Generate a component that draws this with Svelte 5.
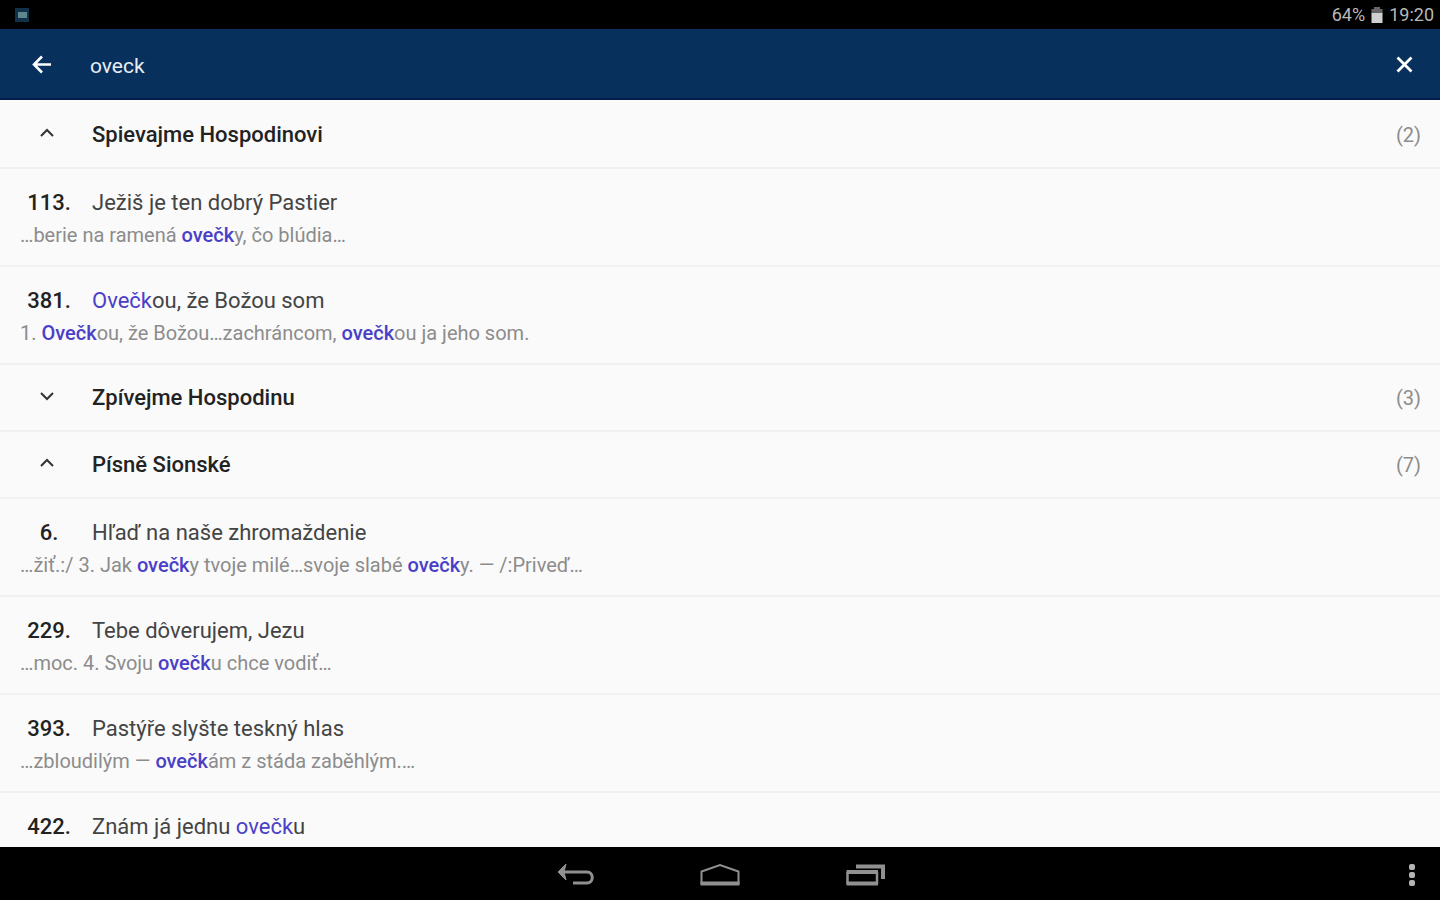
<script lang="ts">
type Song = { number: number; title: string; snippet?: string };
type Songbook = { name: string; count: number; open: boolean; songs: Song[] };

let query = $state("oveck");

let songbooks: Songbook[] = $state([
  {
    name: "Spievajme Hospodinovi",
    count: 2,
    open: true,
    songs: [
      { number: 113, title: "Ježiš je ten dobrý Pastier", snippet: "…berie na ramená ovečky, čo blúdia…" },
      { number: 381, title: "Ovečkou, že Božou som", snippet: "1. Ovečkou, že Božou…zachráncom, ovečkou ja jeho som." },
    ],
  },
  { name: "Zpívejme Hospodinu", count: 3, open: false, songs: [] },
  {
    name: "Písně Sionské",
    count: 7,
    open: true,
    songs: [
      { number: 6, title: "Hľaď na naše zhromaždenie", snippet: "…žiť.:/ 3. Jak ovečky tvoje milé…svoje slabé ovečky. — /:Priveď…" },
      { number: 229, title: "Tebe dôverujem, Jezu", snippet: "…moc. 4. Svoju ovečku chce vodiť…" },
      { number: 393, title: "Pastýře slyšte teskný hlas", snippet: "…zbloudilým — ovečkám z stáda zaběhlým.…" },
      { number: 422, title: "Znám já jednu ovečku" },
    ],
  },
]);

// one character in, one character out, so indexes match the original text
function fold(text: string) {
  return [...text].map(c => c.normalize("NFD")[0].toLowerCase()).join("");
}

function split(text: string, needle: string) {
  const parts: { text: string; hit: boolean }[] = [];
  const folded = fold(text);
  const q = fold(needle.trim());
  let pos = 0;
  while (q && pos < text.length) {
    const found = folded.indexOf(q, pos);
    if (found < 0) break;
    if (found > pos) parts.push({ text: text.slice(pos, found), hit: false });
    parts.push({ text: text.slice(found, found + q.length), hit: true });
    pos = found + q.length;
  }
  if (pos < text.length) parts.push({ text: text.slice(pos), hit: false });
  return parts;
}
</script>

{#snippet marked(text: string)}
  {#each split(text, query) as part}{#if part.hit}<mark>{part.text}</mark>{:else}{part.text}{/if}{/each}
{/snippet}

<div class="screen">
  <div class="status">
    <svg class="notification" width="14" height="14" viewBox="0 0 14 14" aria-hidden="true">
      <rect width="14" height="14" fill="#12324a" />
      <rect x="3" y="4" width="9" height="6" fill="#5f8790" />
    </svg>
    <span>64%</span>
    <svg width="12" height="18" viewBox="0 0 12 18" aria-hidden="true">
      <path d="M3 1h6v2h2.500v5H.5V3H3z" fill="#666" />
      <path d="M.5 7h11v10H.5z" fill="#d0d0d0" />
    </svg>
    <span>19:20</span>
  </div>

  <header>
    <button class="icon" aria-label="Back">
      <svg width="22" height="22" viewBox="0 0 22 22" fill="none" stroke="#fff" stroke-width="2.600">
        <path d="M20 11.500H3M11 3.500l-8 8 8 8" />
      </svg>
    </button>
    <input type="text" aria-label="Search" bind:value={query} />
    <button class="icon" aria-label="Clear" onclick={() => (query = "")}>
      <svg width="22" height="22" viewBox="0 0 22 22" fill="none" stroke="#fff" stroke-width="2.800">
        <path d="M3.500 4.500l14 14M17.500 4.500l-14 14" />
      </svg>
    </button>
  </header>

  <main>
    {#each songbooks as book}
      <section>
        <button class="book" aria-expanded={book.open} onclick={() => (book.open = !book.open)}>
          <span class="chevron">
            <svg width="16" height="10" viewBox="0 0 16 10" fill="none" stroke="#333" stroke-width="2">
              <path d={book.open ? "M2 8l6-6 6 6" : "M2 2l6 6 6-6"} />
            </svg>
          </span>
          <span class="name">{book.name}</span>
          <span class="count">({book.count})</span>
        </button>
        {#if book.open}
          {#each book.songs as song}
            <a class="song" href="#song-{song.number}">
              <span class="heading">
                <span class="number">{song.number}.</span>
                <span class="title">{@render marked(song.title)}</span>
              </span>
              {#if song.snippet}
                <span class="snippet">{@render marked(song.snippet)}</span>
              {/if}
            </a>
          {/each}
        {/if}
      </section>
    {/each}
  </main>

  <nav>
    <div class="keys">
      <button aria-label="Back">
        <svg width="40" height="24" viewBox="0 0 40 24" fill="none" stroke="#909090" stroke-width="3">
          <path d="M10 9h23c7 0 7 11 0 11H19" />
          <path d="M12 1L4 9l8 8-2-8z" fill="#909090" stroke="#909090" stroke-width="1" />
        </svg>
      </button>
      <button aria-label="Home">
        <svg width="40" height="24" viewBox="0 0 40 24" fill="none" stroke="#909090" stroke-width="2">
          <path d="M1.500 21V8.500L20 2l18.500 6.500V21" />
          <path d="M.5 20.500h39" stroke-width="4" />
        </svg>
      </button>
      <button aria-label="Recent apps">
        <svg width="40" height="24" viewBox="0 0 40 24" fill="none" stroke="#909090">
          <path d="M1.500 9v12M31 9v12" stroke-width="2.500" />
          <path d="M.5 9H32M.5 20.500H32" stroke-width="4" />
          <path d="M10 3.500h27V16" stroke-width="4" />
        </svg>
      </button>
    </div>
    <button class="overflow" aria-label="More options">
      <svg width="8" height="24" viewBox="0 0 8 24" fill="#b4b4b4">
        <rect x="1" y="1" width="6" height="6" rx="2" />
        <rect x="1" y="9" width="6" height="6" rx="2" />
        <rect x="1" y="17" width="6" height="6" rx="2" />
      </svg>
    </button>
  </nav>
</div>

<style>
:global(body) {
    margin: 0;
    background: #000;
}

.screen {
    display: flex;
    flex-direction: column;
    height: 100vh;
    font-family: Roboto, "Noto Sans", sans-serif;
    font-size: 22px;
    background: #fafafa;
    color: #444;
}

button {
    border: 0;
    padding: 0;
    background: none;
    font: inherit;
    color: inherit;
    cursor: pointer;
}

svg {
    display: block;
}

.status {
    flex: none;
    display: flex;
    align-items: center;
    gap: 6px;
    height: 29px;
    padding: 0 6px 0 15px;
    background: #000;
    color: #b8b8b8;
    font-size: 18px;
}

.notification {
    margin-right: auto;
}

header {
    flex: none;
    display: flex;
    align-items: center;
    height: 71px;
    box-sizing: border-box;
    padding: 0 24px 0 31px;
    background: #08305c;
    border-bottom: 2px solid #031c4c;
}

header input {
    flex: 1;
    min-width: 0;
    margin: 0 20px 0 37px;
    padding: 4px 0 0;
    border: 0;
    outline: 0;
    background: none;
    color: #e8edf4;
    font: inherit;
    font-size: 21px;
}

main {
    flex: 1;
    min-height: 0;
    padding-top: 2px;
    overflow-y: auto;
    scrollbar-width: none;
}

.book {
    display: flex;
    align-items: center;
    width: 100%;
    height: 67px;
    padding: 0 19px 0 20px;
    border-bottom: 2px solid #f0f0f0;
    text-align: left;
}

.chevron {
    display: flex;
    justify-content: center;
    width: 54px;
    margin-right: 18px;
    padding-bottom: 4px;
}

.name {
    flex: 1;
    color: #222;
    font-weight: 500;
}

.count {
    color: #8c8c8c;
    font-size: 20px;
}

.song {
    display: block;
    height: 98px;
    box-sizing: border-box;
    padding: 18px 20px 0;
    border-bottom: 2px solid #f0f0f0;
    color: inherit;
    text-decoration: none;
    line-height: 32px;
}

.heading {
    display: flex;
}

.number {
    width: 58px;
    margin-right: 14px;
    color: #222;
    font-weight: 500;
    text-align: center;
}

.snippet {
    display: block;
    color: #8c8c8c;
    font-size: 20px;
}

mark {
    background: none;
    color: #4a40c8;
}

.snippet mark {
    font-weight: 500;
}

nav {
    flex: none;
    display: grid;
    grid-template-columns: 1fr auto 1fr;
    align-items: center;
    height: 53px;
    box-sizing: border-box;
    padding: 2px 24px 0;
    background: #000;
}

.keys {
    grid-column: 2;
    display: flex;
    gap: 106px;
}

.overflow {
    justify-self: end;
}
</style>
